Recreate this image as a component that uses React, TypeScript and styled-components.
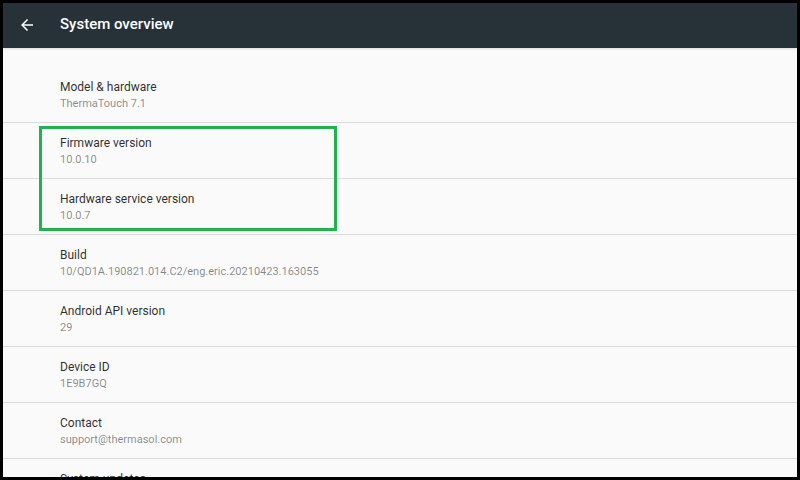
import React from "react";
import styled, { createGlobalStyle } from "styled-components";

const Global = createGlobalStyle`
  html, body { margin: 0; padding: 0; background: #000; }
  body { font-family: Roboto, "Noto Sans", "Liberation Sans", sans-serif; }
  * { box-sizing: border-box; }
`;

const Frame = styled.div`
  width: 800px;
  height: 480px;
  padding: 3px;
  background: #000;
`;

const Screen = styled.div`
  position: relative;
  width: 794px;
  height: 474px;
  background: #fafafa;
  overflow: hidden;
  display: flex;
  flex-direction: column;
`;

const Toolbar = styled.header`
  flex: 0 0 45px;
  height: 45px;
  background: #263238;
  display: flex;
  align-items: center;
  padding: 0 0 3px 15px;
  gap: 24px;
  box-shadow: 0 1px 2px rgba(0, 0, 0, 0.12);
  z-index: 1;
`;

const BackButton = styled.div`
  width: 18px;
  height: 18px;
  display: flex;
  margin-top: 1px;
`;

const Title = styled.h1`
  margin: 0;
  font-size: 15px;
  font-weight: 500;
  color: #ffffff;
  letter-spacing: 0;
  line-height: 20px;
`;

const List = styled.div`
  display: flex;
  flex-direction: column;
  padding-top: 19px;
`;

const Item = styled.div`
  height: 56px;
  padding: 12px 0 0 57px;
  border-bottom: 1px solid #dcdcdc;
  flex-shrink: 0;
`;

const ItemTitle = styled.div`
  font-size: 12px;
  line-height: 16px;
  color: rgba(0, 0, 0, 0.84);
`;

const ItemValue = styled.div`
  font-size: 11px;
  line-height: 17px;
  color: rgba(0, 0, 0, 0.47);
`;

const Highlight = styled.div`
  position: absolute;
  left: 36px;
  top: 123px;
  width: 298px;
  height: 105px;
  border: 3px solid #22b14c;
  pointer-events: none;
`;

const items: [string, string][] = [
  ["Model & hardware", "ThermaTouch 7.1"],
  ["Firmware version", "10.0.10"],
  ["Hardware service version", "10.0.7"],
  ["Build", "10/QD1A.190821.014.C2/eng.eric.20210423.163055"],
  ["Android API version", "29"],
  ["Device ID", "1E9B7GQ"],
  ["Contact", "support@thermasol.com"],
  ["System updates", ""],
];

export default function App() {
  return (
    <>
      <Global />
      <Frame>
        <Screen>
          <Toolbar>
            <BackButton>
              <svg width="18" height="18" viewBox="0 0 24 24" fill="#ffffff">
                <path d="M20 11H7.83l5.59-5.59L12 4l-8 8 8 8 1.41-1.41L7.83 13H20v-2z" />
              </svg>
            </BackButton>
            <Title>System overview</Title>
          </Toolbar>
          <List>
            {items.map(([t, v]) => (
              <Item key={t}>
                <ItemTitle>{t}</ItemTitle>
                <ItemValue>{v}</ItemValue>
              </Item>
            ))}
          </List>
          <Highlight />
        </Screen>
      </Frame>
    </>
  );
}
